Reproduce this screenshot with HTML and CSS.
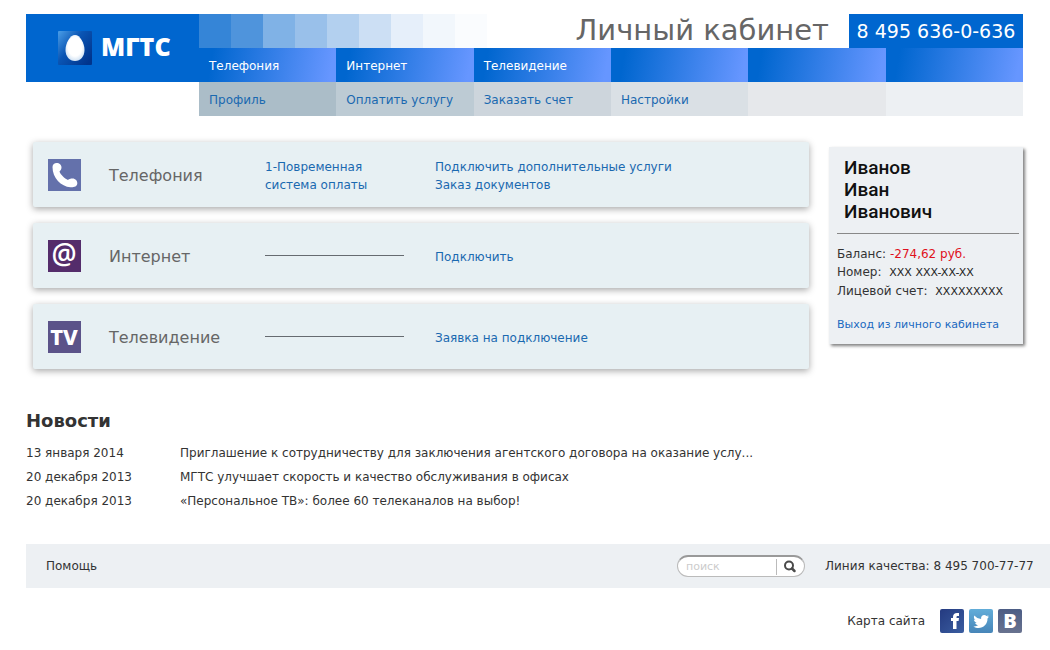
FILE: index.html
```html
<!DOCTYPE html>
<html lang="ru">
<head>
<meta charset="utf-8">
<title>Личный кабинет — МГТС</title>
<link rel="stylesheet" href="styles.css">
</head>
<body>
<header class="header">
  <a class="logo" href="#">
    <svg class="logo-mark" viewBox="0 0 34 34" aria-hidden="true">
      <defs>
        <linearGradient id="tile" x1="0" y1="0" x2="1" y2="0.8"><stop offset="0" stop-color="#4a9ee8"/><stop offset="0.45" stop-color="#0a55b4"/><stop offset="1" stop-color="#00348c"/></linearGradient>
        <radialGradient id="egg" cx="0.5" cy="0.45" r="0.6"><stop offset="0.6" stop-color="#fff"/><stop offset="1" stop-color="#c8ddf2"/></radialGradient>
      </defs>
      <rect width="34" height="34" rx="1" fill="url(#tile)"/>
      <path d="M17 4C22 4 26.500 12 26.500 19C26.500 25.500 22.500 30 17 30C11.500 30 7.500 25.500 7.500 19C7.500 12 12 4 17 4Z" fill="url(#egg)"/>
    </svg>
    <span class="logo-name">МГТС</span>
  </a>
  <div class="header-main">
    <div class="title-row">
      <div class="stripes" aria-hidden="true"><i class="s1"></i><i class="s2"></i><i class="s3"></i><i class="s4"></i><i class="s5"></i><i class="s6"></i><i class="s7"></i><i class="s8"></i><i class="s9"></i></div>
      <h1 class="page-title">Личный кабинет</h1>
      <div class="hotline">8 495 636-0-636</div>
    </div>
    <nav class="nav nav-primary">
      <a href="#">Телефония</a><a href="#">Интернет</a><a href="#">Телевидение</a><span></span><span></span><span></span>
    </nav>
    <nav class="nav nav-secondary">
      <a class="t1" href="#">Профиль</a><a class="t2" href="#">Оплатить услугу</a><a class="t3" href="#">Заказать счет</a><a class="t4" href="#">Настройки</a><span class="t5"></span><span class="t6"></span>
    </nav>
  </div>
</header>

<main class="main">
  <section class="services">
    <article class="card">
      <svg class="card-icon" viewBox="0 0 33 32" aria-hidden="true"><rect width="33" height="32" fill="#6471ab"/><path d="M4.500 8C4.500 5.500 6.500 4 8.500 4C11.500 4 13.500 6 13.500 8.500C13.500 10.500 12.300 11.500 11.500 12.500C12.500 15.500 16.500 19.500 20 21C21 20 22.500 19.500 24.500 19.500C27.500 19.500 29.500 22 29.300 24.500C29 27.500 26 28.500 22.500 28.300C13 27.500 4.500 19 4.500 8Z" fill="#fff"/></svg>
      <h2 class="card-title">Телефония</h2>
      <div class="card-plan"><a href="#">1-Повременная<br>система оплаты</a></div>
      <div class="card-links"><a href="#">Подключить дополнительные услуги</a><a href="#">Заказ документов</a></div>
    </article>
    <article class="card">
      <svg class="card-icon" viewBox="0 0 33 32" aria-hidden="true"><rect width="33" height="32" fill="#542c6b"/><text class="icon-at" x="16" y="24" text-anchor="middle">@</text></svg>
      <h2 class="card-title">Интернет</h2>
      <div class="card-plan"><hr class="no-plan"></div>
      <div class="card-links"><a href="#">Подключить</a></div>
    </article>
    <article class="card">
      <svg class="card-icon" viewBox="0 0 33 32" aria-hidden="true"><rect width="33" height="32" fill="#5b5389"/><text class="icon-tv" x="16" y="24" text-anchor="middle">TV</text></svg>
      <h2 class="card-title">Телевидение</h2>
      <div class="card-plan"><hr class="no-plan"></div>
      <div class="card-links"><a href="#">Заявка на подключение</a></div>
    </article>
  </section>
  <aside class="account">
    <div class="account-name">Иванов<br>Иван<br>Иванович</div>
    <div class="account-info">
      <div>Баланс: <span class="debt">-274,62 руб.</span></div>
      <div>Номер: <span class="masked">XXX XXX-XX-XX</span></div>
      <div>Лицевой счет: <span class="masked">XXXXXXXXX</span></div>
    </div>
    <a class="logout" href="#">Выход из личного кабинета</a>
  </aside>
</main>

<section class="news">
  <h2 class="news-title">Новости</h2>
  <table class="news-list">
    <tbody>
      <tr><td class="news-date">13 января 2014</td><td>Приглашение к сотрудничеству для заключения агентского договора на оказание услу...</td></tr>
      <tr><td class="news-date">20 декабря 2013</td><td>МГТС улучшает скорость и качество обслуживания в офисах</td></tr>
      <tr><td class="news-date">20 декабря 2013</td><td>«Персональное ТВ»: более 60 телеканалов на выбор!</td></tr>
    </tbody>
  </table>
</section>

<footer>
  <div class="footer-bar">
    <a class="help" href="#">Помощь</a>
    <form class="search">
      <input class="search-input" type="text" placeholder="поиск" aria-label="Поиск">
      <button class="search-button" type="button" aria-label="Найти"><svg width="14" height="14" viewBox="0 0 14 14" aria-hidden="true"><circle cx="6" cy="5.500" r="4" fill="none" stroke="#4a4a4a" stroke-width="2"/><path d="M9 8.500L11.500 11" stroke="#4a4a4a" stroke-width="2.500" stroke-linecap="round"/></svg></button>
    </form>
    <div class="quality">Линия качества: 8 495 700-77-77</div>
  </div>
  <div class="footer-links">
    <a class="sitemap" href="#">Карта сайта</a>
    <div class="social">
      <a href="#" aria-label="Facebook"><svg viewBox="0 0 24 24"><defs><linearGradient id="fb" x1="0" y1="0" x2="1" y2="1"><stop offset="0" stop-color="#243a80"/><stop offset="1" stop-color="#3a5da0"/></linearGradient></defs><rect width="24" height="24" rx="2" fill="url(#fb)"/><path d="M13 20V12H11V9H13V8C13 5.300 14.500 4 17 4H19V7H17.800C16.800 7 16.500 7.400 16.500 8.300V9H19L18.600 12H16.500V20Z" fill="#fff"/></svg></a>
      <a href="#" aria-label="Twitter"><svg viewBox="0 0 24 24"><defs><linearGradient id="tw" x1="0" y1="0" x2="0" y2="1"><stop offset="0" stop-color="#62add9"/><stop offset="1" stop-color="#4785b8"/></linearGradient></defs><rect width="24" height="24" rx="2" fill="url(#tw)"/><path d="M20 7.500C19.400 7.800 18.800 8 18.100 8.100C18.800 7.700 19.300 7 19.500 6.300C18.900 6.600 18.200 6.900 17.500 7C15.500 4.800 11.600 6.300 12.100 9.900C9.400 9.800 7 8.500 5.400 6.500C4.400 8.100 5 10 6.400 11C5.900 11 5.400 10.800 5 10.600C5 12.200 6.100 13.500 7.700 13.900C7.200 14 6.700 14 6.200 13.900C6.600 15.200 7.800 16.100 9.300 16.100C7.900 17.200 6.200 17.700 4.400 17.500C11.100 21.500 18.700 17 18.500 9.500C19.100 9 19.600 8.300 20 7.500Z" fill="#fff"/></svg></a>
      <a href="#" aria-label="ВКонтакте"><svg viewBox="0 0 24 24"><defs><linearGradient id="vk" x1="0" y1="0" x2="0" y2="1"><stop offset="0" stop-color="#4c5d85"/><stop offset="1" stop-color="#68728f"/></linearGradient></defs><rect width="24" height="24" rx="2" fill="url(#vk)"/><text class="icon-vk" x="12" y="19" text-anchor="middle">В</text></svg></a>
    </div>
  </div>
</footer>
</body>
</html>
```
FILE: styles.css
```css
* { box-sizing: border-box; }
body {
  margin: 0;
  padding: 14px 0 16px 26px;
  background: #fff;
  color: #333;
  font: 12px/18px "DejaVu Sans", sans-serif;
}
a { color: #1a69b0; text-decoration: none; }
h1, h2 { margin: 0; }
svg { display: block; overflow: visible; }

.header { display: flex; align-items: flex-start; margin-right: 27px; }
.logo {
  display: flex;
  align-items: center;
  gap: 9px;
  width: 173px;
  height: 68px;
  padding-left: 32px;
  background: #0066cf;
}
.logo-mark { width: 34px; height: 34px; }
.logo-name { color: #fff; font: 800 25px/30px "Open Sans", sans-serif; padding-bottom: 4px; }
.header-main { flex: 1; }
.title-row { display: flex; height: 34px; }
.stripes { display: flex; margin-right: auto; }
.stripes i { width: 32px; }
.s1 { background: #3585d7; }
.s2 { background: #4f94dc; }
.s3 { background: #80b2e6; }
.s4 { background: #99c0ea; }
.s5 { background: #b3d0ef; }
.s6 { background: #ccdff4; }
.s7 { background: #e6effa; }
.s8 { background: #f2f7fc; }
.s9 { background: #fafcfe; }
.page-title {
  margin-right: 20px;
  color: #666;
  font-size: 29px;
  font-weight: 400;
  line-height: 32px;
  white-space: nowrap;
}
.hotline {
  width: 174px;
  background: #0066cf;
  color: #fff;
  font-size: 19px;
  line-height: 34px;
  text-align: center;
  white-space: nowrap;
}
.nav { display: grid; grid-template-columns: repeat(6, 1fr); height: 34px; line-height: 36px; }
.nav > * { height: 34px; padding-left: 10px; white-space: nowrap; }
.nav-primary > * { background: linear-gradient(100deg, #0066cf 10%, #6696ff 95%); color: #fff; }
.t1 { background: #abbdc8; }
.t2 { background: #bdcbd4; }
.t3 { background: #cdd5dc; }
.t4 { background: #dae0e5; }
.t5 { background: #e6e8eb; }
.t6 { background: #edf0f3; }

.main { display: flex; align-items: flex-start; gap: 20px; margin: 26px 27px 0 7px; }
.services { display: grid; flex: 1; gap: 16px; }
.card {
  display: grid;
  grid-template-columns: 61px 156px 170px 1fr;
  align-items: center;
  min-height: 65px;
  padding: 0 15px;
  border-radius: 2px;
  background: #e7f0f3;
  box-shadow: 0 2px 7px rgba(0, 0, 0, 0.35);
}
.card-icon { width: 33px; height: 32px; }
.card-title { padding-top: 2px; color: #666; font-size: 16px; font-weight: 400; line-height: 24px; }
.card-links { display: grid; justify-items: start; padding-top: 2px; }
.card-plan a { display: block; padding-top: 2px; }
.no-plan { width: 139px; margin: 0; border: 0; border-top: 1px solid #666b70; }
.icon-at { fill: #fff; font: 600 28px "Open Sans", sans-serif; }
.icon-tv { fill: #fff; font: 800 22px "Noto Sans", sans-serif; }

.account {
  width: 194px;
  margin-top: 5px;
  padding: 10px 4px 10px 8px;
  background: #edf0f3;
  box-shadow: 2px 2px 3px rgba(0, 0, 0, 0.5);
}
.account-name {
  padding: 0 0 10px 7px;
  border-bottom: 1px solid #888;
  color: #111;
  font: 500 19px/22px Roboto, sans-serif;
}
.account-info { padding: 11px 0 14px; white-space: nowrap; }
.debt { color: #e01020; }
.masked { margin-left: 4px; color: #222; font-size: 11px; }
.logout { font-size: 11px; color: #1a69c0; white-space: nowrap; }

.news { margin: 40px 27px 0 0; }
.news-title { font-size: 18px; line-height: 24px; }
.news-list { margin-top: 8px; border-collapse: collapse; line-height: 24px; }
.news-list td { padding: 0; }
.news-list .news-date { width: 154px; }

.footer-bar {
  display: flex;
  align-items: center;
  gap: 20px;
  min-height: 44px;
  margin-top: 31px;
  padding: 0 7px 0 20px;
  background: #edf0f3;
}
.help { margin-right: auto; color: #333; }
.quality { min-width: 218px; }
.search {
  display: flex;
  align-items: center;
  width: 128px;
  height: 22px;
  border: 1px solid #bbb;
  border-top: 2px solid #999;
  border-radius: 11px;
  background: #fff;
}
.search-input {
  width: 99px;
  height: 16px;
  padding: 0 0 0 8px;
  border: 0;
  border-right: 1px solid #bbb;
  outline: 0;
  background: none;
  font: 11px/16px "DejaVu Sans", sans-serif;
}
.search-input::placeholder { color: #ccc; }
.search-button { padding: 0 0 0 6px; border: 0; background: none; }
.footer-links { display: flex; justify-content: flex-end; align-items: center; gap: 15px; margin: 21px 28px 0 0; }
.sitemap { color: #333; }
.social { display: flex; gap: 5px; }
.social svg { width: 24px; height: 24px; }
.icon-vk { fill: #fff; font: 800 20px "Open Sans", sans-serif; }
```
